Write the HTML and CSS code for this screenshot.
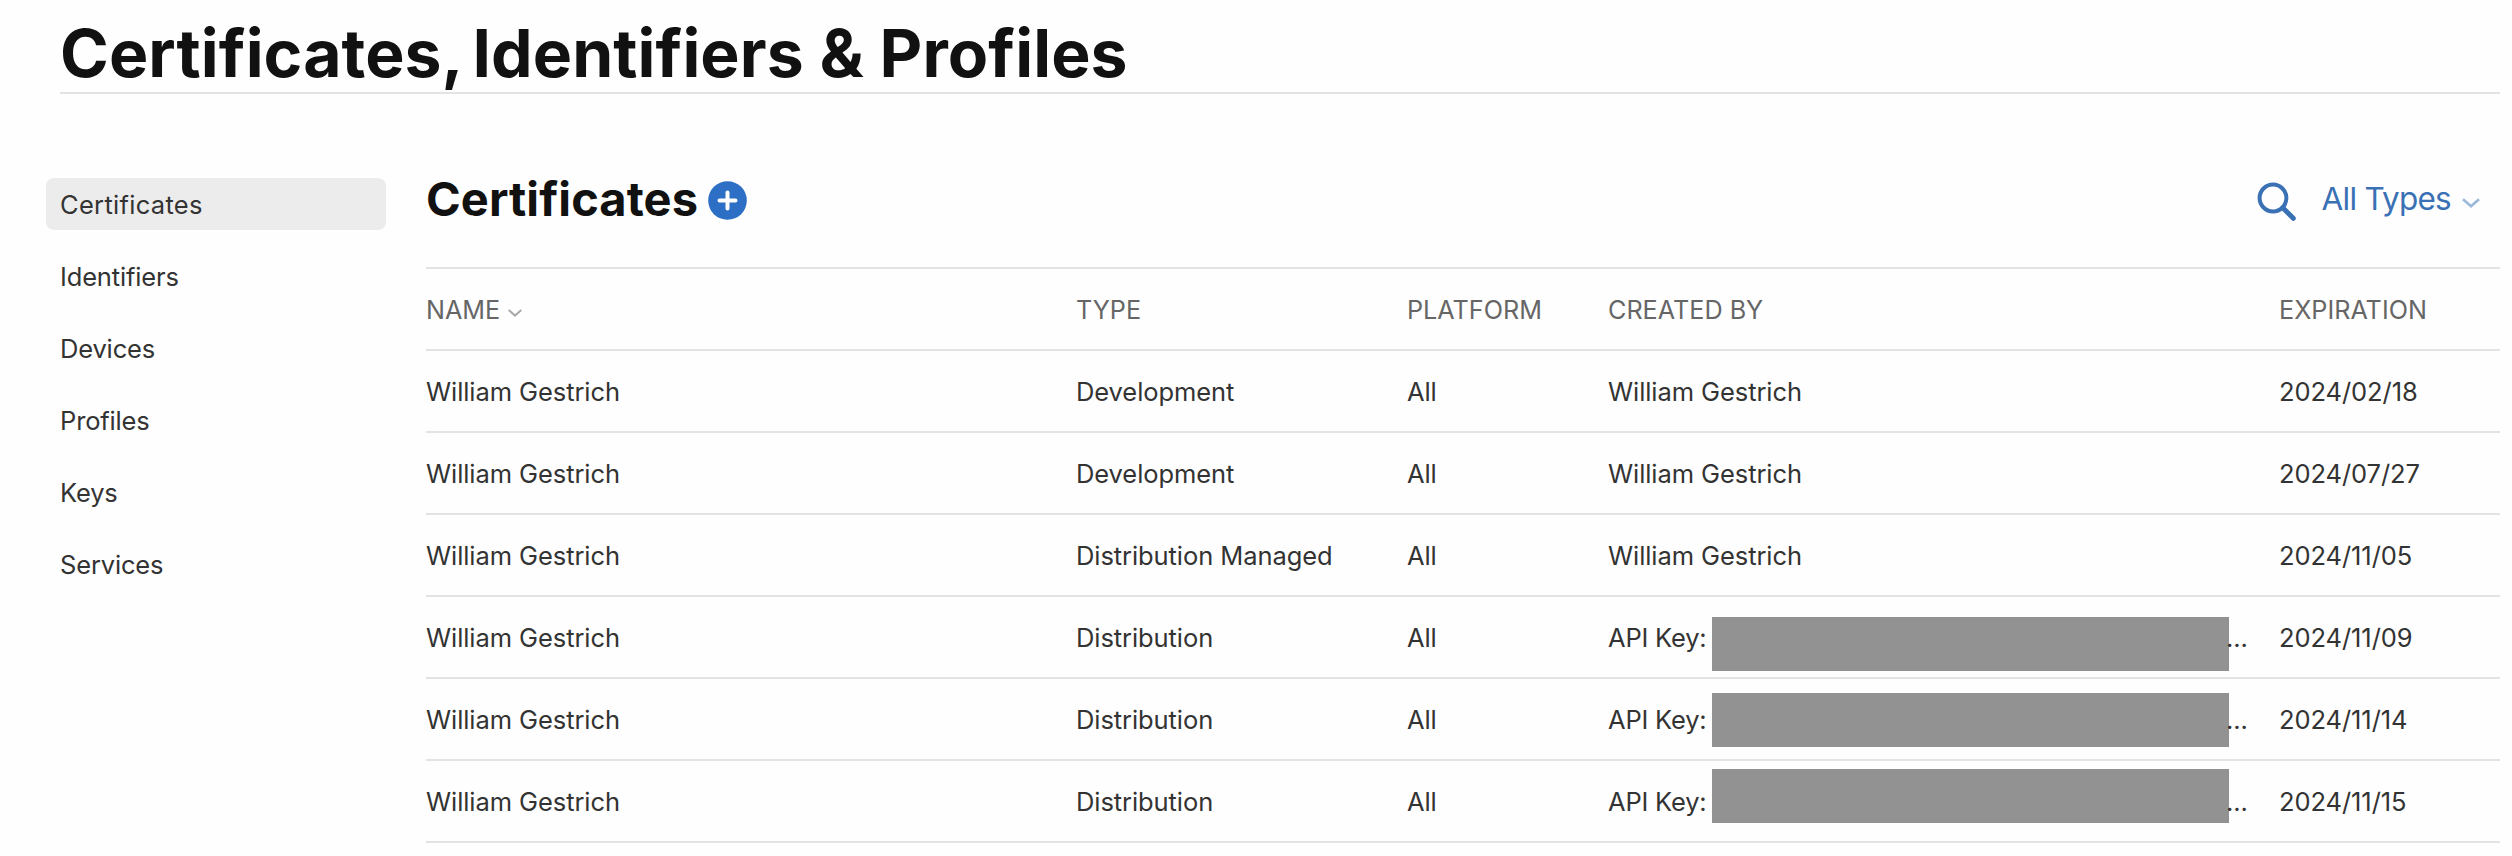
FILE: index.html
```html
<!DOCTYPE html>
<html lang="en">
<head>
<meta charset="utf-8">
<title>Certificates, Identifiers &amp; Profiles</title>
<link rel="stylesheet" href="styles.css">
</head>
<body>
<header class="page-header">
  <h1 class="page-title"><span class="tight">Certificates, </span>Identifiers &amp; Profiles</h1>
</header>
<div class="layout">
  <nav class="sidebar">
    <a class="nav-item active">Certificates</a>
    <a class="nav-item">Identifiers</a>
    <a class="nav-item">Devices</a>
    <a class="nav-item">Profiles</a>
    <a class="nav-item">Keys</a>
    <a class="nav-item">Services</a>
  </nav>
  <main class="content">
    <div class="toolbar">
      <h2 class="section-title">Certificates</h2>
      <svg class="add-icon" viewBox="0 0 39 39"><circle cx="19.5" cy="19.5" r="19.3" fill="#2c6fc4"/><path d="M19.5 11.5v16M11.5 19.5h16" stroke="#fff" stroke-width="4" stroke-linecap="round"/></svg>
      <div class="filters">
        <svg class="search-icon" viewBox="0 0 40 40" fill="none" stroke="#3a71b4"><circle cx="16" cy="16" r="13.4" stroke-width="4"/><path d="M25.8 25.8L36.3 36.3" stroke-width="5" stroke-linecap="round"/></svg>
        <span class="filter-label">All Types</span>
        <svg class="filter-chevron" viewBox="0 0 18 10" fill="none" stroke="#9bb8da" stroke-width="2.6"><path d="M1 1.2L9 8.2L17 1.2"/></svg>
      </div>
    </div>
    <div class="table">
      <div class="row head"><span>NAME<svg class="sort-chevron" viewBox="0 0 14 8" fill="none" stroke="#aaa" stroke-width="2"><path d="M.7 1L7 6.6L13.3 1"/></svg></span><span>TYPE</span><span>PLATFORM</span><span>CREATED BY</span><span>EXPIRATION</span></div>
      <div class="row"><span>William Gestrich</span><span>Development</span><span>All</span><span>William Gestrich</span><span>2024/02/18</span></div>
      <div class="row"><span>William Gestrich</span><span>Development</span><span>All</span><span>William Gestrich</span><span>2024/07/27</span></div>
      <div class="row"><span>William Gestrich</span><span>Distribution Managed</span><span>All</span><span>William Gestrich</span><span>2024/11/05</span></div>
      <div class="row"><span>William Gestrich</span><span>Distribution</span><span>All</span><span class="key"><span class="key-label">API Key:</span><i class="mask mask-low"></i><span class="dots">...</span></span><span>2024/11/09</span></div>
      <div class="row"><span>William Gestrich</span><span>Distribution</span><span>All</span><span class="key"><span class="key-label">API Key:</span><i class="mask mask-mid"></i><span class="dots">...</span></span><span>2024/11/14</span></div>
      <div class="row"><span>William Gestrich</span><span>Distribution</span><span>All</span><span class="key"><span class="key-label">API Key:</span><i class="mask mask-high"></i><span class="dots">...</span></span><span>2024/11/15</span></div>
    </div>
  </main>
</div>
</body>
</html>
```
FILE: styles.css
```css
* { box-sizing: border-box; }
body {
  margin: 0;
  background: #fefefe;
  color: #333;
  font: 400 25.5px/40px Inter, "Liberation Sans", sans-serif;
  letter-spacing: -0.08px;
}
.page-header {
  margin: 0 12px 0 60px;
  height: 94px;
  padding-top: 13px;
  border-bottom: 2px solid #e3e3e3;
}
.page-title {
  margin: 0;
  color: #111;
  font-size: 66px;
  font-weight: 700;
  line-height: 80px;
  letter-spacing: 0.08px;
  white-space: nowrap;
}
.tight { word-spacing: -5px; }
.layout { display: flex; padding: 84px 12px 0 46px; }
.sidebar {
  display: flex;
  flex-direction: column;
  gap: 20px;
  width: 340px;
  margin-right: 40px;
}
.nav-item {
  height: 52px;
  padding: 1px 14px 0;
  line-height: 52px;
  border-radius: 8px;
  letter-spacing: -0.16px;
}
.nav-item.active { background: #ececec; letter-spacing: 0.3px; }
.content { flex: 1; }
.toolbar { display: flex; height: 89px; align-items: flex-start; }
.section-title {
  margin: -8px 0 0;
  color: #111;
  font-size: 47px;
  font-weight: 700;
  line-height: 58px;
  letter-spacing: 0.08px;
}
.add-icon { width: 39px; height: 39px; margin: 3px 0 0 10px; }
.filters { display: flex; margin: 4px 20px 0 auto; }
.search-icon { width: 40px; height: 40px; }
.filter-label {
  margin: -3px 0 0 25px;
  color: #3a71b4;
  font-size: 31.5px;
  letter-spacing: -0.75px;
}
.filter-chevron { width: 18px; height: 10px; margin: 16px 0 0 11px; }
.table { border-top: 2px solid #e3e3e3; }
.row {
  display: grid;
  grid-template-columns: 650px 331px 201px 671px 1fr;
  height: 82px;
  padding-top: 1px;
  align-items: center;
  border-bottom: 2px solid #e3e3e3;
}
.head { color: #666; font-size: 25.2px; letter-spacing: 0; }
.sort-chevron { width: 14px; height: 8px; margin: 0 0 2px 8px; }
.key { display: flex; align-items: center; height: 79px; }
.key-label { width: 104px; letter-spacing: -0.2px; }
.mask { width: 517px; height: 54px; background: #929292; }
.mask-low { margin-top: 13px; }
.mask-mid { margin-top: 1px; }
.mask-high { margin-bottom: 11px; }
.dots { margin-left: -3px; }
```
